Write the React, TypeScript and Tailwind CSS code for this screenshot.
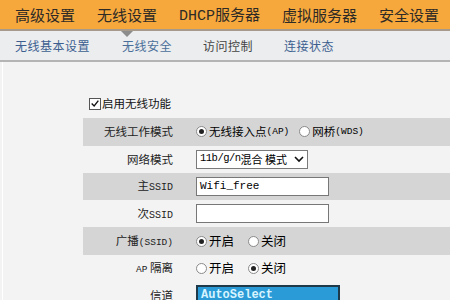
import React from 'react';

const CN = { fontFamily: '"Noto Sans CJK SC", "Noto Sans", sans-serif' };
const MONO = { fontFamily: '"Liberation Mono", "DejaVu Sans Mono", monospace' };

function Radio({ checked, className = '' }: { checked?: boolean; className?: string }) {
  return (
    <span
      className={`flex h-[11px] w-[11px] shrink-0 items-center justify-center rounded-full border border-[#8a8a8a] bg-white ${className}`}
    >
      {checked && <span className="h-[5px] w-[5px] rounded-full bg-[#222]" />}
    </span>
  );
}

function Row({
  gray,
  label,
  children,
}: {
  gray?: boolean;
  label: React.ReactNode;
  children?: React.ReactNode;
}) {
  return (
    <div className={`flex h-[27.3px] items-center whitespace-nowrap ${gray ? 'bg-[#d5d5d5]' : ''}`}>
      <div className="w-[90px] text-right text-[11.5px] text-[#222]">{label}</div>
      <div className="ml-[23px] flex items-center">{children}</div>
    </div>
  );
}

export default function App() {
  return (
    <div className="h-[300px] w-[450px] overflow-hidden whitespace-nowrap bg-[#f3f3f3]" style={CN}>
      {/* top menu */}
      <div className="flex h-[29px] items-center gap-[22px] bg-[#f6a83c] pl-[15px] text-[15px] leading-none text-[#2e2a26]">
        <span>高级设置</span>
        <span>无线设置</span>
        <span>
          <span style={MONO}>DHCP</span>服务器
        </span>
        <span>虚拟服务器</span>
        <span>安全设置</span>
      </div>
      <div className="h-[2px] bg-[#a89a8a]" />

      {/* sub menu */}
      <div className="relative flex h-[31px] items-center border-b-2 border-[#b4b4b4] bg-[#ebedef] pl-[15px] text-[12px] tracking-[0.5px]">
        <span className="absolute left-[121px] top-0 h-0 w-0 border-x-[6px] border-t-[6px] border-x-transparent border-t-[#8c8c8c]" />
        <span className="text-[#3c5f8f]">无线基本设置</span>
        <span className="ml-[32px] text-[#4a6f9a]">无线安全</span>
        <span className="ml-[31px] text-[#444]">访问控制</span>
        <span className="ml-[31px] text-[#3c5f8f]">连接状态</span>
      </div>

      {/* content */}
      <div className="ml-[2px] border-l border-white pl-[80px] pt-[33px]">
        <label className="ml-[6px] flex items-center gap-[1px] text-[11.5px] text-[#111]">
          <span className="flex h-[12px] w-[12px] items-center justify-center border border-[#555] bg-white">
            <svg viewBox="0 0 12 12" className="h-[11px] w-[11px]">
              <path d="M2 6 L5 9 L10 2.5" fill="none" stroke="#111" strokeWidth="1.6" />
            </svg>
          </span>
          启用无线功能
        </label>

        <div className="mt-[6px]">
          <Row gray label="无线工作模式">
            <Radio checked />
            <span className="ml-[2px] text-[11.5px]">无线接入点</span>
            <span className="text-[9.5px]" style={MONO}>(AP)</span>
            <Radio className="ml-[10px]" />
            <span className="ml-[2px] text-[11.5px]">网桥</span>
            <span className="text-[9.5px]" style={MONO}>(WDS)</span>
          </Row>
          <Row label="网络模式">
            <div className="flex h-[19px] w-[112px] items-center justify-between border border-[#7a7a7a] bg-white pl-[3px] pr-[3px] text-[11px]">
              <span className="flex items-center">
                <span className="text-[10.5px] tracking-[-0.5px]" style={MONO}>11b/g/n</span>
                <span>混合 模式</span>
              </span>
              <svg viewBox="0 0 10 8" className="h-[8px] w-[10px] shrink-0">
                <path d="M1 2 L5 6 L9 2" fill="none" stroke="#111" strokeWidth="1.6" />
              </svg>
            </div>
          </Row>
          <Row gray label={<><span>主</span><span className="text-[10px]" style={MONO}>SSID</span></>}>
            <div className="flex h-[19px] w-[133px] items-center border border-[#777] bg-white pl-[3px] text-[11px]" style={MONO}>
              Wifi_free
            </div>
          </Row>
          <Row label={<><span>次</span><span className="text-[10px]" style={MONO}>SSID</span></>}>
            <div className="h-[19px] w-[133px] border border-[#777] bg-white" />
          </Row>
          <Row gray label={<><span>广播</span><span className="text-[9.5px]" style={MONO}>(SSID)</span></>}>
            <Radio checked />
            <span className="ml-[2px] text-[12.5px]">开启</span>
            <Radio className="ml-[14px]" />
            <span className="ml-[2px] text-[12.5px]">关闭</span>
          </Row>
          <Row label={<><span className="text-[9.5px]" style={MONO}>AP</span> 隔离</>}>
            <Radio />
            <span className="ml-[2px] text-[12.5px]">开启</span>
            <Radio checked className="ml-[14px]" />
            <span className="ml-[2px] text-[12.5px]">关闭</span>
          </Row>
          <Row label="信道">
            <div className="-mt-[2px] flex h-[19px] w-[144px] items-center border-2 border-[#1e3a4a] bg-[#2a9bd6] pl-[3px] text-[12px] font-bold text-[#d8f4ff]" style={MONO}>
              AutoSelect
            </div>
          </Row>
        </div>
      </div>
    </div>
  );
}
